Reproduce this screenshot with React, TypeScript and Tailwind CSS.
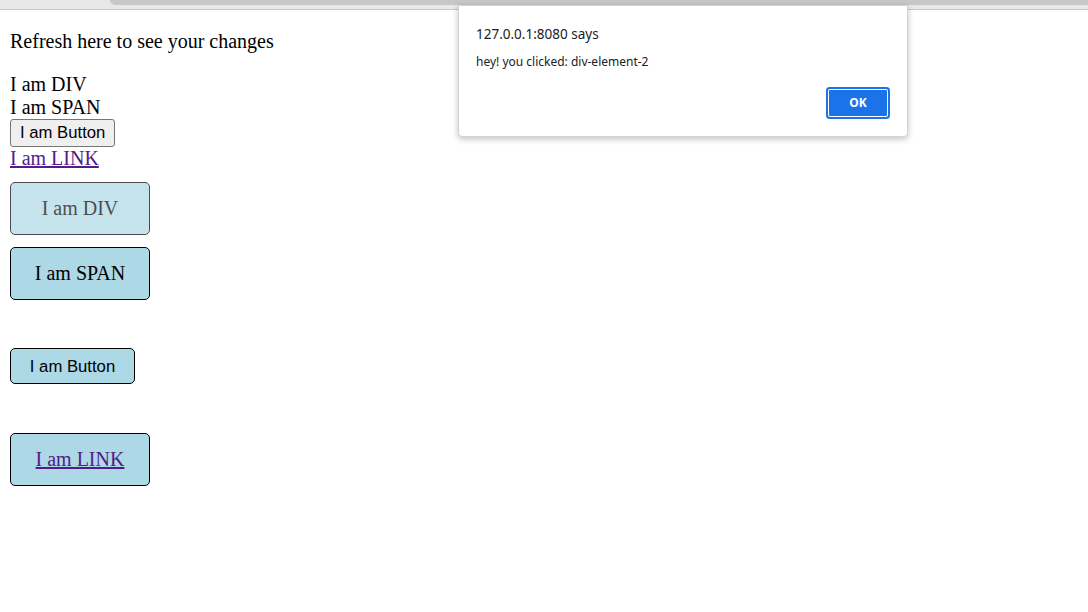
export default function App() {
  const serif = { fontFamily: '"Liberation Serif", "Times New Roman", serif' };

  return (
    <div className="relative w-[1088px] h-[612px] bg-white overflow-hidden" style={serif}>
      {/* browser chrome strip */}
      <div className="relative h-[10px] bg-[#e8e8e8] border-b border-[#c9c9c9]">
        <div className="absolute left-[110px] right-0 top-0 h-[5px] bg-[#c7c7c7] rounded-bl-[6px]" />
      </div>

      {/* page */}
      <div className="px-[10px] text-[20px] leading-[23px] text-black">
        <p className="mt-[20px] mb-[20px]">Refresh here to see your changes</p>
        <div>I am DIV</div>
        <span className="block">I am SPAN</span>
        <button
          className="block h-[28px] px-[9px] text-[16.7px] leading-[20px] bg-[#efefef] border border-[#767676] rounded-[3px] text-black"
          style={{ fontFamily: '"Liberation Sans", Arial, sans-serif' }}
        >
          I am Button
        </button>
        <a href="#" className="text-[#551a8b] underline">I am LINK</a>

        <div className="mt-[12px] w-[140px] h-[53px] flex items-center justify-center bg-[#add8e6] border border-black rounded-[5px] opacity-70">
          I am DIV
        </div>
        <span className="mt-[12px] w-[140px] h-[53px] flex items-center justify-center bg-[#add8e6] border border-black rounded-[5px]">
          I am SPAN
        </span>
        <button
          className="mt-[48px] w-[125px] h-[36px] flex items-center justify-center bg-[#add8e6] border border-black rounded-[5px] text-[16.7px] text-black"
          style={{ fontFamily: '"Liberation Sans", Arial, sans-serif' }}
        >
          I am Button
        </button>
        <a
          href="#"
          className="mt-[49px] w-[140px] h-[53px] flex items-center justify-center bg-[#add8e6] border border-black rounded-[5px] text-[#551a8b] underline"
        >
          I am LINK
        </a>
      </div>

      {/* alert dialog */}
      <div
        className="absolute left-[458px] top-[5px] w-[450px] h-[132px] bg-white border border-[#d4d4d4] rounded-b-[4px] shadow-[0_2px_6px_rgba(0,0,0,0.25)] px-[17px] pt-[18px]"
        style={{ fontFamily: '"Noto Sans", "Open Sans", sans-serif' }}
      >
        <div className="text-[13.5px] leading-[20px] text-[#202124]">127.0.0.1:8080 says</div>
        <div className="mt-[10px] text-[12px] leading-[16px] text-[#202124]">hey! you clicked: div-element-2</div>
        <div className="flex justify-end mt-[17px]">
          <button className="w-[64px] h-[32px] rounded-[4px] bg-[#1a73e8] text-white text-[12px] font-bold shadow-[inset_0_0_0_2px_#1a73e8,inset_0_0_0_3px_#ffffff]">
            OK
          </button>
        </div>
      </div>
    </div>
  );
}
